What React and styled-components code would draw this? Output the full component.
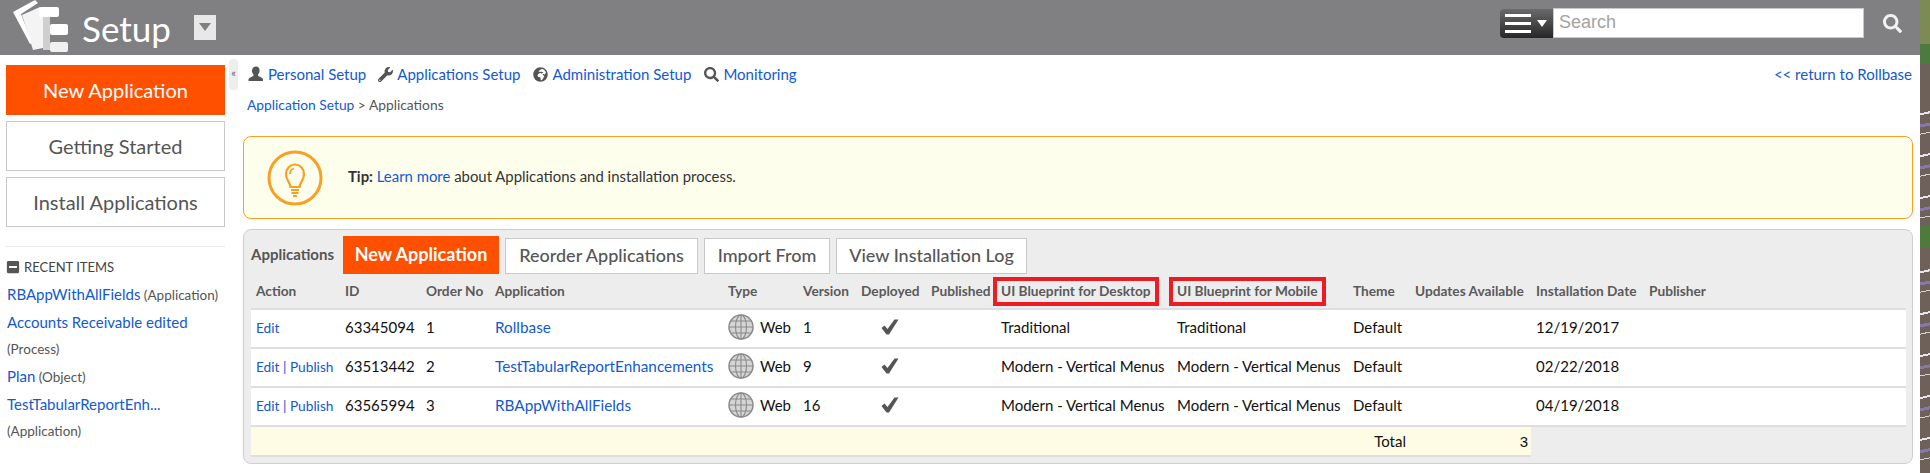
import styled, { createGlobalStyle } from "styled-components";
import { FaWrench, FaGlobeAfrica, FaSearch, FaMinusSquare } from "react-icons/fa";

const GlobalStyle = createGlobalStyle`
  html, body {
    margin: 0;
    padding: 0;
    background: #fff;
    overflow: hidden;
  }
  * { box-sizing: border-box; }
`;

const BLUE = "#1259d2";

const columns = [89, 81, 69, 233, 75, 58, 70, 70, 176, 176, 62, 121, 113, 262];

const apps = [
  { id: "63345094", order: "1", name: "Rollbase", version: "1", desktop: "Traditional", mobile: "Traditional", date: "12/19/2017", publish: false },
  { id: "63513442", order: "2", name: "TestTabularReportEnhancements", version: "9", desktop: "Modern - Vertical Menus", mobile: "Modern - Vertical Menus", date: "02/22/2018", publish: true },
  { id: "63565994", order: "3", name: "RBAppWithAllFields", version: "16", desktop: "Modern - Vertical Menus", mobile: "Modern - Vertical Menus", date: "04/19/2018", publish: true },
];

const Shell = styled.div`
  display: flex;
  width: 1930px;
  height: 473px;
  font-family: Lato, "Open Sans", sans-serif;
  color: #444;
`;

const Page = styled.div`
  width: 1920px;
  background: #fff;
`;

const Strip = styled.div`
  width: 10px;
  background:
    repeating-linear-gradient(168deg, transparent 0 13px, #e9e4ee 13px 15px, transparent 15px 24px, #8877aa 24px 27px, transparent 27px 33px, #d8d2c8 33px 34px, transparent 34px 41px) 0 100px / 10px 122px no-repeat,
    repeating-linear-gradient(168deg, transparent 0 13px, #e9e4ee 13px 15px, transparent 15px 24px, #8877aa 24px 27px, transparent 27px 33px, #d8d2c8 33px 34px, transparent 34px 41px) 0 258px / 10px 215px no-repeat,
    linear-gradient(180deg, #7c8a55 0 44px, #4d7a3f 44px 64px, #6e6159 64px 225px, #4f7a3c 225px 248px, #6e6159 248px 100%);
`;

const Header = styled.header`
  height: 55px;
  background: #808082;
  display: flex;
  align-items: center;
  padding-left: 13px;
`;

const Logo = styled.svg`
  width: 57px;
  height: 55px;
  flex: none;
`;

const Title = styled.h1`
  margin: 0 0 0 12px;
  font-size: 35px;
  font-weight: 400;
  color: #fff;
  width: 112px;
`;

const AppMenu = styled.div`
  width: 22px;
  height: 25px;
  margin-top: -1px;
  background: #e8e8e8;
  display: flex;
  align-items: center;
  justify-content: center;
  &::after {
    content: "";
    border-left: 6px solid transparent;
    border-right: 6px solid transparent;
    border-top: 8px solid #808082;
  }
`;

const SearchGroup = styled.div`
  margin-left: auto;
  display: flex;
  align-items: center;
  margin-top: -9px;
`;

const SearchMenu = styled.div`
  width: 53px;
  height: 29px;
  border-radius: 4px 0 0 4px;
  background: linear-gradient(180deg, #6a6a6a, #262626);
  display: flex;
  align-items: center;
  padding-left: 5px;
  gap: 6px;
`;

const Burger = styled.span`
  width: 26px;
  height: 19px;
  border-top: 3px solid #fff;
  border-bottom: 3px solid #fff;
  position: relative;
  &::after {
    content: "";
    position: absolute;
    left: 0;
    right: 0;
    top: 5px;
    height: 3px;
    background: #fff;
  }
`;

const Caret = styled.span`
  border-left: 5px solid transparent;
  border-right: 5px solid transparent;
  border-top: 7px solid #fff;
`;

const SearchInput = styled.input`
  width: 311px;
  height: 30px;
  border: 1px solid #c8c8c8;
  background: #fff;
  padding: 0 5px 2px;
  font-family: "Liberation Sans", Arial, sans-serif;
  font-size: 18px;
  outline: none;
  &::placeholder {
    color: #a3a3a3;
    opacity: 1;
  }
`;

const SearchButton = styled.div`
  width: 56px;
  color: #f2f2f2;
  font-size: 19px;
  display: flex;
  justify-content: center;
  padding-top: 1px;
`;

const Body = styled.div`
  display: flex;
`;

const Sidebar = styled.aside`
  width: 229px;
  flex: none;
  padding: 10px 4px 0 6px;
`;

const SideButton = styled.div`
  height: 50px;
  margin-bottom: 6px;
  display: flex;
  align-items: center;
  justify-content: center;
  font-size: 20px;
  color: ${(p) => (p.$primary ? "#fff" : "#555")};
  background: ${(p) => (p.$primary ? "#ff5000" : "#fff")};
  border: ${(p) => (p.$primary ? "none" : "1px solid #c9c9c9")};
`;

const Recent = styled.section`
  margin-top: 19px;
  border-top: 1px solid #eaeaea;
  padding-top: 11px;
`;

const RecentTitle = styled.h3`
  margin: 0 0 5px;
  display: flex;
  align-items: center;
  gap: 4px;
  font-size: 13px;
  font-weight: 400;
  color: #444;
  height: 18px;
  line-height: 18px;
  svg {
    font-size: 14px;
    color: #555;
  }
`;

const RecentItem = styled.div`
  padding-left: 1px;
  font-size: 13.5px;
  line-height: ${(p) => p.$height || 27}px;
  color: #555;
  white-space: nowrap;
`;

const RecentLink = styled.a`
  color: ${BLUE};
  font-size: 15px;
`;

const Handle = styled.div`
  width: 9px;
  height: 31px;
  margin-top: 4px;
  border-radius: 4px;
  background: #eeeeee;
  color: #666;
  font-size: 11px;
  line-height: 28px;
  text-align: center;
  flex: none;
`;

const Main = styled.main`
  flex: 1;
  padding: 9px 7px 0 5px;
  min-width: 0;
`;

const NavRow = styled.nav`
  height: 20px;
  display: flex;
  align-items: center;
  padding-left: 5px;
  font-size: 15px;
`;

const NavItem = styled.a`
  display: flex;
  align-items: center;
  gap: 4px;
  color: ${BLUE};
  margin-right: ${(p) => p.$gap || 13}px;
  white-space: nowrap;
  svg {
    color: #555;
    font-size: 15px;
    flex: none;
  }
`;

const ReturnLink = styled.a`
  margin-left: auto;
  color: ${BLUE};
  padding-right: 1px;
`;

const Breadcrumb = styled.div`
  margin-top: 11px;
  height: 20px;
  padding-left: 4px;
  font-size: 13.8px;
  line-height: 20px;
  color: #555;
  a {
    color: ${BLUE};
  }
`;

const Tip = styled.div`
  margin-top: 21px;
  height: 83px;
  border: 1px solid #f9a024;
  border-radius: 8px;
  background: #fefeec;
  display: flex;
  align-items: center;
  padding-left: 23px;
  font-size: 14.9px;
  color: #333;
  a {
    color: ${BLUE};
  }
  b {
    color: #333;
  }
`;

const TipText = styled.span`
  padding-bottom: 3px;
`;

const TipIcon = styled.svg`
  width: 56px;
  height: 56px;
  margin-right: 25px;
  flex: none;
`;

const Panel = styled.section`
  margin-top: 10px;
  height: 235px;
  background: #ededed;
  border: 1px solid #cfcfcf;
  border-radius: 8px;
  padding: 6px 6px 0 7px;
`;

const Toolbar = styled.div`
  height: 38px;
  display: flex;
  align-items: flex-start;
`;

const ToolbarLabel = styled.span`
  width: 92px;
  padding-top: 9px;
  font-size: 15px;
  font-weight: 700;
  color: #555;
`;

const ToolButton = styled.div`
  height: ${(p) => (p.$primary ? 38 : 36)}px;
  margin-top: ${(p) => (p.$primary ? 0 : 2)}px;
  width: ${(p) => p.$width}px;
  margin-right: 6px;
  padding-bottom: 2px;
  display: flex;
  align-items: center;
  justify-content: center;
  font-size: 18px;
  font-weight: ${(p) => (p.$primary ? 700 : 500)};
  color: ${(p) => (p.$primary ? "#fff" : "#555")};
  background: ${(p) => (p.$primary ? "#ff5000" : "#fff")};
  border: ${(p) => (p.$primary ? "none" : "1px solid #c9c9c9")};
`;

const Table = styled.table`
  width: 1655px;
  table-layout: fixed;
  border-collapse: collapse;
  font-size: 15px;
`;

const Th = styled.th`
  height: 35px;
  padding: 0 0 0 5px;
  text-align: left;
  font-size: 13.7px;
  font-weight: 700;
  color: #5a5a5a;
  white-space: nowrap;
  border-bottom: 2px solid #dedede;
`;

const HeadLabel = styled.span`
  position: relative;
  display: inline-block;
  line-height: 18px;
  ${(p) =>
    p.$marked &&
    `&::after {
      content: "";
      position: absolute;
      inset: -5px -8px -6px -8px;
      border: 4px solid #ed1c24;
    }`}
`;

const Row = styled.tr`
  background: #fff;
  height: 39px;
`;

const Td = styled.td`
  padding: 0 0 3px 5px;
  color: #111;
  white-space: nowrap;
  border-bottom: 2px solid #dedede;
  a {
    color: ${BLUE};
  }
`;

const ActionCell = styled(Td)`
  font-size: 13.7px;
  color: ${BLUE};
`;

const AppLink = styled.a`
  font-size: 15.3px;
`;

const TypeBox = styled.div`
  display: flex;
  align-items: center;
  gap: 6px;
`;

const Globe = styled.svg`
  width: 26px;
  height: 26px;
  flex: none;
`;

const Check = styled.svg`
  display: block;
  width: 18px;
  height: 16px;
  margin-left: 20px;
`;

const Totals = styled.td`
  height: 30px;
  background: #fffce5;
  border-bottom: 2px solid #dedede;
  text-align: right;
  padding-right: ${(p) => p.$pad}px;
  color: #111;
`;

const CountText = styled.span`
  font-family: "Liberation Sans", Arial, sans-serif;
  font-size: 15px;
`;

const PersonIcon = () => (
  <svg width="16" height="16" viewBox="0 0 16 16" fill="currentColor">
    <path d="M8 0.5c2.3 0 3.6 1.7 3.6 3.9 0 1.6-.7 3-1.5 3.9v1.3c0 .6 1.2 1 2.6 1.6 1.4.6 2.3 1.2 2.3 2.3v1.5H.5V13.5c0-1.1.9-1.7 2.3-2.3 1.4-.6 2.6-1 2.6-1.6V8.3c-.8-.9-1.5-2.3-1.5-3.9C4.4 2.2 5.7.5 8 .5z" />
  </svg>
);

const LogoMark = () => (
  <Logo viewBox="0 0 57 55">
    <polygon points="0,12 22,0 25,3 8,14 19,43 17,44" fill="#fff" />
    <polygon points="9,15 27,7 30,15 30,48 20,50" fill="#f4f4f4" />
    <rect x="26" y="7" width="20" height="10" rx="2" fill="#fff" />
    <rect x="30" y="17" width="7" height="33" fill="#cfcfcf" />
    <rect x="36" y="27" width="3" height="4" fill="#cfcfcf" />
    <rect x="36" y="44" width="3" height="4" fill="#cfcfcf" />
    <rect x="37" y="24" width="18" height="11" rx="2" fill="#fff" />
    <rect x="37" y="42" width="18" height="10" rx="2" fill="#f0f0f0" />
  </Logo>
);

const BulbIcon = () => (
  <TipIcon viewBox="0 0 56 56" fill="none" stroke="#f9a024">
    <circle cx="28" cy="28" r="26" strokeWidth="3" />
    <path d="M23.5 37c0-4-4.5-6.5-4.5-13 0-5.500 4-9.500 9-9.500s9 4 9 9.500c0 6.500-4.500 9-4.500 13z" strokeWidth="2.200" />
    <path d="M23 24c0-3 2-5 4-5.500" strokeWidth="1.800" />
    <path d="M24 40h8M24.500 43h7M26 46h4" strokeWidth="1.800" />
  </TipIcon>
);

const GlobeIcon = () => (
  <Globe viewBox="0 0 26 26" fill="none" stroke="#8a8a8a" strokeWidth="1.100">
    <circle cx="13" cy="13" r="12" fill="#d5d5d5" strokeWidth="1.500" />
    <ellipse cx="13" cy="13" rx="5.500" ry="12" />
    <path d="M13 1v24M1 13h24M3 7h20M3 19h20" />
  </Globe>
);

const CheckIcon = () => (
  <Check viewBox="0 0 18 16">
    <path d="M.5 9l3-2.500 3 3.500L13.500 .5h4L8 15.500H5.500z" fill="#555" />
  </Check>
);

const App = () => {
  return (
    <Shell>
      <GlobalStyle />
      <Page>
        <Header>
          <LogoMark />
          <Title>Setup</Title>
          <AppMenu />
          <SearchGroup>
            <SearchMenu>
              <Burger />
              <Caret />
            </SearchMenu>
            <SearchInput placeholder="Search" readOnly />
            <SearchButton>
              <FaSearch />
            </SearchButton>
          </SearchGroup>
        </Header>
        <Body>
          <Sidebar>
            <SideButton $primary>New Application</SideButton>
            <SideButton>Getting Started</SideButton>
            <SideButton>Install Applications</SideButton>
            <Recent>
              <RecentTitle>
                <FaMinusSquare />
                RECENT ITEMS
              </RecentTitle>
              <RecentItem>
                <RecentLink>RBAppWithAllFields</RecentLink> (Application)
              </RecentItem>
              <RecentItem>
                <RecentLink>Accounts Receivable edited</RecentLink>
              </RecentItem>
              <RecentItem $height={25}>(Process)</RecentItem>
              <RecentItem $height={28}>
                <RecentLink>Plan</RecentLink> (Object)
              </RecentItem>
              <RecentItem $height={27}>
                <RecentLink>TestTabularReportEnh...</RecentLink>
              </RecentItem>
              <RecentItem $height={24}>(Application)</RecentItem>
            </Recent>
          </Sidebar>
          <Handle>«</Handle>
          <Main>
            <NavRow>
              <NavItem $gap={12}>
                <PersonIcon />
                Personal Setup
              </NavItem>
              <NavItem>
                <FaWrench />
                Applications Setup
              </NavItem>
              <NavItem>
                <FaGlobeAfrica />
                Administration Setup
              </NavItem>
              <NavItem>
                <FaSearch />
                Monitoring
              </NavItem>
              <ReturnLink>&lt;&lt; return to Rollbase</ReturnLink>
            </NavRow>
            <Breadcrumb>
              <a>Application Setup</a> &gt; Applications
            </Breadcrumb>
            <Tip>
              <BulbIcon />
              <TipText>
                <b>Tip:</b> <a>Learn more</a> about Applications and installation process.
              </TipText>
            </Tip>
            <Panel>
              <Toolbar>
                <ToolbarLabel>Applications</ToolbarLabel>
                <ToolButton $primary $width={156}>New Application</ToolButton>
                <ToolButton $width={193}>Reorder Applications</ToolButton>
                <ToolButton $width={126}>Import From</ToolButton>
                <ToolButton $width={191}>View Installation Log</ToolButton>
              </Toolbar>
              <Table>
                <colgroup>
                  {columns.map((w, i) => (
                    <col key={i} width={w} />
                  ))}
                </colgroup>
                <thead>
                  <tr>
                    <Th><HeadLabel>Action</HeadLabel></Th>
                    <Th><HeadLabel>ID</HeadLabel></Th>
                    <Th><HeadLabel>Order No</HeadLabel></Th>
                    <Th><HeadLabel>Application</HeadLabel></Th>
                    <Th><HeadLabel>Type</HeadLabel></Th>
                    <Th><HeadLabel>Version</HeadLabel></Th>
                    <Th><HeadLabel>Deployed</HeadLabel></Th>
                    <Th><HeadLabel>Published</HeadLabel></Th>
                    <Th><HeadLabel $marked>UI Blueprint for Desktop</HeadLabel></Th>
                    <Th><HeadLabel $marked>UI Blueprint for Mobile</HeadLabel></Th>
                    <Th><HeadLabel>Theme</HeadLabel></Th>
                    <Th><HeadLabel>Updates Available</HeadLabel></Th>
                    <Th><HeadLabel>Installation Date</HeadLabel></Th>
                    <Th><HeadLabel>Publisher</HeadLabel></Th>
                  </tr>
                </thead>
                <tbody>
                  {apps.map((app) => (
                    <Row key={app.id}>
                      <ActionCell>
                        <a>Edit</a>
                        {app.publish && (
                          <>
                            {" | "}
                            <a>Publish</a>
                          </>
                        )}
                      </ActionCell>
                      <Td>{app.id}</Td>
                      <Td>{app.order}</Td>
                      <Td><AppLink>{app.name}</AppLink></Td>
                      <Td>
                        <TypeBox>
                          <GlobeIcon />
                          Web
                        </TypeBox>
                      </Td>
                      <Td>{app.version}</Td>
                      <Td><CheckIcon /></Td>
                      <Td />
                      <Td>{app.desktop}</Td>
                      <Td>{app.mobile}</Td>
                      <Td>Default</Td>
                      <Td />
                      <Td>{app.date}</Td>
                      <Td />
                    </Row>
                  ))}
                  <tr>
                    <Totals colSpan={11} $pad={4}>Total</Totals>
                    <Totals $pad={3}><CountText>3</CountText></Totals>
                  </tr>
                </tbody>
              </Table>
            </Panel>
          </Main>
        </Body>
      </Page>
      <Strip />
    </Shell>
  );
};

export default App;
